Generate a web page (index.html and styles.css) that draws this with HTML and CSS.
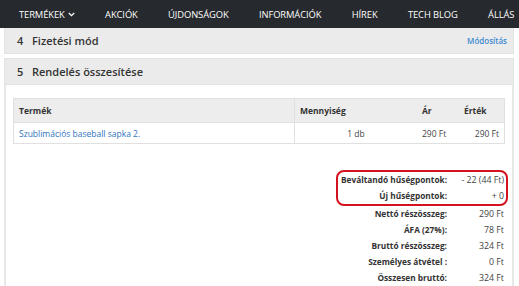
FILE: index.html
```html
<!DOCTYPE html>
<html lang="hu">
<head>
    <meta charset="UTF-8">
    <meta name="viewport" content="width=device-width, initial-scale=1.0">
    <title>Pénztár</title>
    <link rel="stylesheet" href="styles.css">
</head>
<body>
    <nav class="topnav">
        <a href="#">TERMÉKEK <svg class="chev" width="7" height="5" viewBox="0 0 7 5"><path d="M0.8 1 L3.5 3.6 L6.2 1" fill="none" stroke="#fff" stroke-width="1.3"/></svg></a>
        <a href="#">AKCIÓK</a>
        <a href="#">ÚJDONSÁGOK</a>
        <a href="#">INFORMÁCIÓK</a>
        <a href="#">HÍREK</a>
        <a href="#">TECH BLOG</a>
        <a href="#">ÁLLÁS</a>
    </nav>

    <div class="content">
        <div class="panel collapsed">
            <div class="panel-head first">
                <div class="panel-title"><span class="step">4</span>Fizetési mód</div>
                <a class="edit" href="#">Módosítás</a>
            </div>
        </div>

        <div class="panel">
            <div class="panel-head">
                <div class="panel-title"><span class="step">5</span>Rendelés összesítése</div>
            </div>
            <div class="panel-body">
                <table class="items">
                    <thead>
                        <tr>
                            <th class="col-name">Termék</th>
                            <th class="col-qty">Mennyiség</th>
                            <th class="col-price">Ár</th>
                            <th class="col-total">Érték</th>
                        </tr>
                    </thead>
                    <tbody>
                        <tr>
                            <td class="col-name"><a href="#">Szublimációs baseball sapka 2.</a></td>
                            <td class="col-qty center">1 db</td>
                            <td class="col-price">290 Ft</td>
                            <td class="col-total right">290 Ft</td>
                        </tr>
                    </tbody>
                </table>

                <div class="summary">
                    <div class="points">
                        <div class="sum-row"><span>Beváltandó hűségpontok:</span><span>- 22 (44 Ft)</span></div>
                        <div class="sum-row"><span>Új hűségpontok:</span><span>+ 0</span></div>
                    </div>
                    <div class="sum-row plain"><span>Nettó részösszeg:</span><span>290 Ft</span></div>
                    <div class="sum-row plain"><span>ÁFA (27%):</span><span>78 Ft</span></div>
                    <div class="sum-row plain"><span>Bruttó részösszeg:</span><span>324 Ft</span></div>
                    <div class="sum-row plain"><span>Személyes átvétel :</span><span>0 Ft</span></div>
                    <div class="sum-row plain"><span>Összesen bruttó:</span><span>324 Ft</span></div>
                </div>
            </div>
        </div>
    </div>
</body>
</html>
```

FILE: styles.css
```css
body {
    margin: 0;
    padding: 0;
    font-family: "Open Sans", "DejaVu Sans", sans-serif;
    color: #333333;
    background-color: #ffffff;
    overflow: hidden;
}
a {
    text-decoration: none;
}
.topnav {
    display: flex;
    align-items: center;
    gap: 30.4px;
    height: 28px;
    padding: 0 0 0 19px;
    background-color: #26292d;
    white-space: nowrap;
}
.topnav a {
    color: #ffffff;
    font-size: 9.4px;
    letter-spacing: -0.1px;
    display: flex;
    align-items: center;
    gap: 3px;
}
.chev {
    margin-top: 1px;
}
.content {
    padding: 0 5px 0 4px;
}
.panel {
    margin-bottom: 4px;
}
.panel-head {
    display: flex;
    justify-content: space-between;
    align-items: center;
    height: 25px;
    padding: 0 6px 0 12px;
    background-color: #ebebeb;
    border: 1px solid #e2e2e2;
}
.panel-head.first {
    border-top: none;
    height: 25px;
}
.panel-title {
    font-size: 11px;
    font-weight: 600;
    color: #333333;
}
.step {
    display: inline-block;
    width: 15px;
}
.edit {
    font-size: 8px;
    color: #3d8ad0;
    font-weight: 600;
}
.panel-body {
    border-left: 2px solid #e8e8e8;
    border-right: 2px solid #e8e8e8;
    padding: 13px 7px 20px 7px;
    min-height: 200px;
}
.items {
    width: 100%;
    border-collapse: collapse;
    font-size: 8.5px;
    border: 1px solid #e0e0e0;
}
.items th {
    background-color: #ededed;
    font-weight: 700;
    text-align: left;
    height: 23px;
    padding: 0 5px;
    color: #333333;
}
.items td {
    height: 20px;
    padding: 0 5px;
    border-top: 1px solid #e0e0e0;
    color: #444444;
}
.items .col-qty {
    width: 112px;
    border-left: 1px solid #e0e0e0;
}
.items .col-price {
    width: 32px;
}
.items .col-total {
    width: 35px;
}
.items td a {
    color: #2f74c0;
}
.center {
    text-align: center;
}
.right {
    text-align: right;
}
.summary {
    width: 172px;
    margin: 26px -3px 0 auto;
    font-size: 8.3px;
}
.points {
    border: 2px solid #d4121f;
    border-radius: 8px;
    padding: 0 2px 0 3px;
}
.sum-row {
    display: grid;
    grid-template-columns: 1fr 57px;
    line-height: 16px;
    text-align: right;
    white-space: nowrap;
}
.sum-row span:first-child {
    font-weight: 700;
    color: #333333;
}
.sum-row span:last-child {
    font-size: 8.8px;
    color: #444444;
}
.sum-row.plain {
    padding: 0 4px 0 5px;
}
```
